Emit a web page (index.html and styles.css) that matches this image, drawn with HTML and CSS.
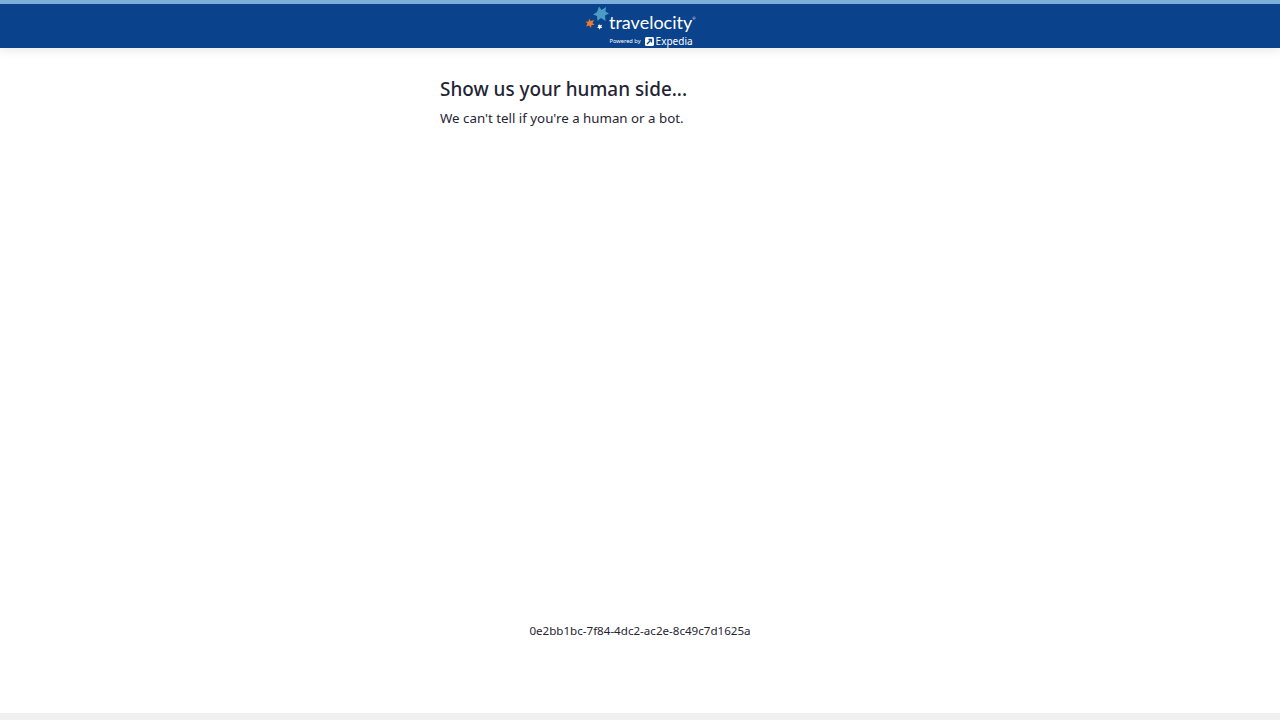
FILE: index.html
```html
<!DOCTYPE html>
<html lang="en">
<head>
    <meta charset="UTF-8">
    <title>Show us your human side...</title>
    <link rel="stylesheet" href="styles.css">
</head>
<body>
    <header class="site-header">
        <div class="logo">
            <svg class="logo-stars" width="25" height="26" viewBox="0 0 25 26">
                <path fill="#4b9cc4" d="M14 1.500l2.500 3.500L21 2l-.5 4.500 3.500 2-4 2 .5 5.500-4.500-3-3.500 3-.5-5-4-1.500 4-2.500z"/>
                <path fill="#ee7b2c" d="M4 13.500l1.500 2.500 3.500-1-1.500 3L9.500 20 6.500 20 6 23 4.200 20.500 1 21.500l1.500-3L.5 16.500l3 .3z"/>
                <path fill="#fff" d="M14.500 18.500l.7 1.800 2-.5-1 1.800 1.100 1.500-1.900-.1-.9 1.800-.6-1.800-1.900-.2 1.500-1.300-.7-1.800 1.700.6z"/>
            </svg>
            <div class="logo-text">
                <div class="logo-name">travelocity<sup class="logo-tm">&reg;</sup></div>
                <div class="logo-sub">
                    <span class="powered">Powered by</span>
                    <svg class="expedia-mark" width="9" height="9" viewBox="0 0 9 9"><rect width="9" height="9" rx="1.500" fill="#fff"/><path d="M2 7l3.500-3.500M3.500 2.500H6.500V5.500" stroke="#0a428c" stroke-width="1.300" fill="none"/></svg>
                    <span class="expedia">Expedia</span>
                </div>
            </div>
        </div>
    </header>

    <main class="content">
        <h1>Show us your human side...</h1>
        <p>We can't tell if you're a human or a bot.</p>
    </main>

    <div class="request-id">0e2bb1bc-7f84-4dc2-ac2e-8c49c7d1625a</div>

    <footer class="site-footer"></footer>
</body>
</html>
```

FILE: styles.css
```css
html, body {
    height: 100%;
}

body {
    margin: 0;
    display: flex;
    flex-direction: column;
    font-family: "Noto Sans", "Open Sans", Arial, sans-serif;
    color: #1f2533;
    background-color: #fff;
    overflow: hidden;
}

.site-header {
    height: 44px;
    border-top: 4px solid #7cb0db;
    background-color: #0a428c;
    box-shadow: 0 2px 10px rgba(0,0,0,0.1);
    display: flex;
    justify-content: center;
}

.logo {
    display: flex;
    width: 110px;
    color: #fff;
}

.logo-stars {
    flex: 0 0 auto;
    margin-top: 1px;
    margin-right: -1px;
}

.logo-text {
    display: flex;
    flex-direction: column;
    align-items: flex-end;
    flex: 1;
}

.logo-name {
    font-family: "Lato", sans-serif;
    font-size: 18px;
    line-height: 20px;
    margin-top: 8px;
    margin-right: 2px;
    white-space: nowrap;
}

.logo-tm {
    font-size: 4px;
    line-height: 0;
    vertical-align: 9px;
}

.logo-sub {
    display: flex;
    align-items: center;
    gap: 3px;
    margin-top: 4px;
    margin-right: 5px;
    white-space: nowrap;
}

.powered {
    font-size: 5.7px;
    line-height: 10px;
    margin-right: 1px;
}

.expedia {
    font-size: 10px;
    line-height: 10px;
    margin-left: -1px;
}

.content {
    width: 400px;
    margin: 27px auto 0;
    height: 546px;
}

h1 {
    margin: 0;
    font-size: 18.9px;
    font-weight: 500;
    line-height: 28px;
}

.content p {
    margin: 5px 0 0;
    font-size: 13.3px;
    line-height: 20px;
}

.request-id {
    text-align: center;
    font-size: 11.6px;
    line-height: 20px;
}

.site-footer {
    margin-top: auto;
    height: 7px;
    background-color: #f0f0f0;
}
```
